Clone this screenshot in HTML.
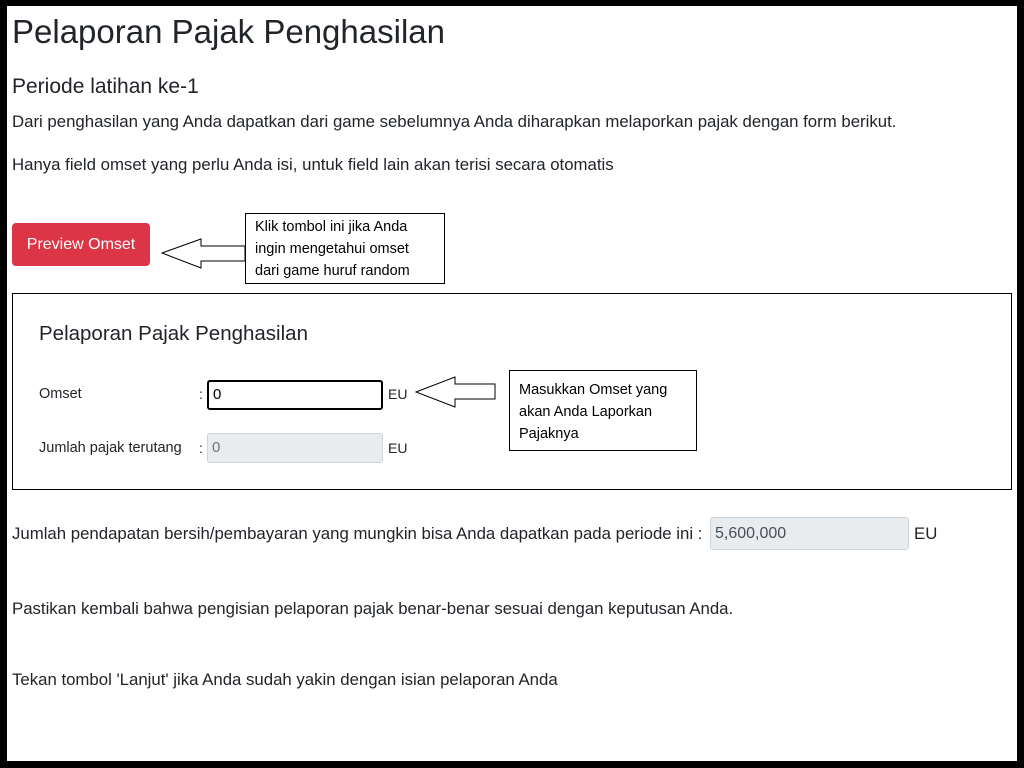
<!DOCTYPE html>
<html><head><meta charset="utf-8"><style>
*{margin:0;padding:0;box-sizing:border-box}
html,body{width:1024px;height:768px;overflow:hidden;background:#000}
#pg{position:absolute;left:7px;top:6px;width:1010px;height:755px;background:#fff;font-family:"Liberation Sans",sans-serif;color:#212529}
.a{position:absolute;white-space:nowrap}
.box{position:absolute;border:1px solid #000;background:#fff;font-size:14.5px;line-height:22px;padding:2px 9px;color:#000;white-space:nowrap}
.in{position:absolute;border:1px solid #ced4da;border-radius:3px;font-size:15px;padding:0 4px;line-height:28px;height:30px}
.t{font-size:16.8px}
</style></head><body><div id="pg">
<div class="a" style="left:5px;top:7px;font-size:33px;">Pelaporan Pajak Penghasilan</div>
<div class="a" style="left:5px;top:69px;font-size:21px">Periode latihan ke-1</div>
<div class="a t" style="left:5px;top:106px">Dari penghasilan yang Anda dapatkan dari game sebelumnya Anda diharapkan melaporkan pajak dengan form berikut.</div>
<div class="a t" style="left:5px;top:149px">Hanya field omset yang perlu Anda isi, untuk field lain akan terisi secara otomatis</div>
<div class="a" style="left:5px;top:217px;width:138px;height:43px;background:#dc3545;border-radius:4px;color:#fff;font-size:16px;line-height:43px;text-align:center">Preview Omset</div>
<svg class="a" style="left:154px;top:232px" width="86" height="32"><polygon points="1,15 40,1 40,8 84,8 84,23 40,23 40,30" fill="#fff" stroke="#000"/></svg>
<div class="box" style="left:238px;top:207px;width:200px;height:71px">Klik tombol ini jika Anda<br>ingin mengetahui omset<br>dari game huruf random</div>
<div class="a" style="left:5px;top:287px;width:1000px;height:197px;border:1px solid #000"></div>
<div class="a" style="left:32px;top:316px;font-size:20.5px">Pelaporan Pajak Penghasilan</div>
<div class="a" style="left:32px;top:380px;font-size:14.5px">Omset</div>
<div class="a" style="left:192px;top:380px;font-size:14px">:</div>
<div class="in" style="left:200px;top:374px;width:176px;border:2px solid #000;line-height:26px;color:#000">0</div>
<div class="a" style="left:381px;top:380px;font-size:14px">EU</div>
<svg class="a" style="left:408px;top:370px" width="82" height="32"><polygon points="1,16 40,1 40,8 80,8 80,23 40,23 40,31" fill="#fff" stroke="#000"/></svg>
<div class="box" style="left:502px;top:364px;width:188px;height:81px;padding-top:8px">Masukkan Omset yang<br>akan Anda Laporkan<br>Pajaknya</div>
<div class="a" style="left:32px;top:434px;font-size:14.5px">Jumlah pajak terutang</div>
<div class="a" style="left:192px;top:434px;font-size:14px">:</div>
<div class="in" style="left:200px;top:427px;width:176px;background:#e9ecef;color:#6c757d">0</div>
<div class="a" style="left:381px;top:434px;font-size:14px">EU</div>
<div class="a t" style="left:5px;top:518px">Jumlah pendapatan bersih/pembayaran yang mungkin bisa Anda dapatkan pada periode ini :</div>
<div class="in" style="left:703px;top:511px;width:199px;height:33px;line-height:31px;background:#e9ecef;color:#495057;font-size:16px">5,600,000</div>
<div class="a t" style="left:907px;top:518px">EU</div>
<div class="a t" style="left:5px;top:593px">Pastikan kembali bahwa pengisian pelaporan pajak benar-benar sesuai dengan keputusan Anda.</div>
<div class="a t" style="left:5px;top:664px">Tekan tombol 'Lanjut' jika Anda sudah yakin dengan isian pelaporan Anda</div>
</div></body></html>
